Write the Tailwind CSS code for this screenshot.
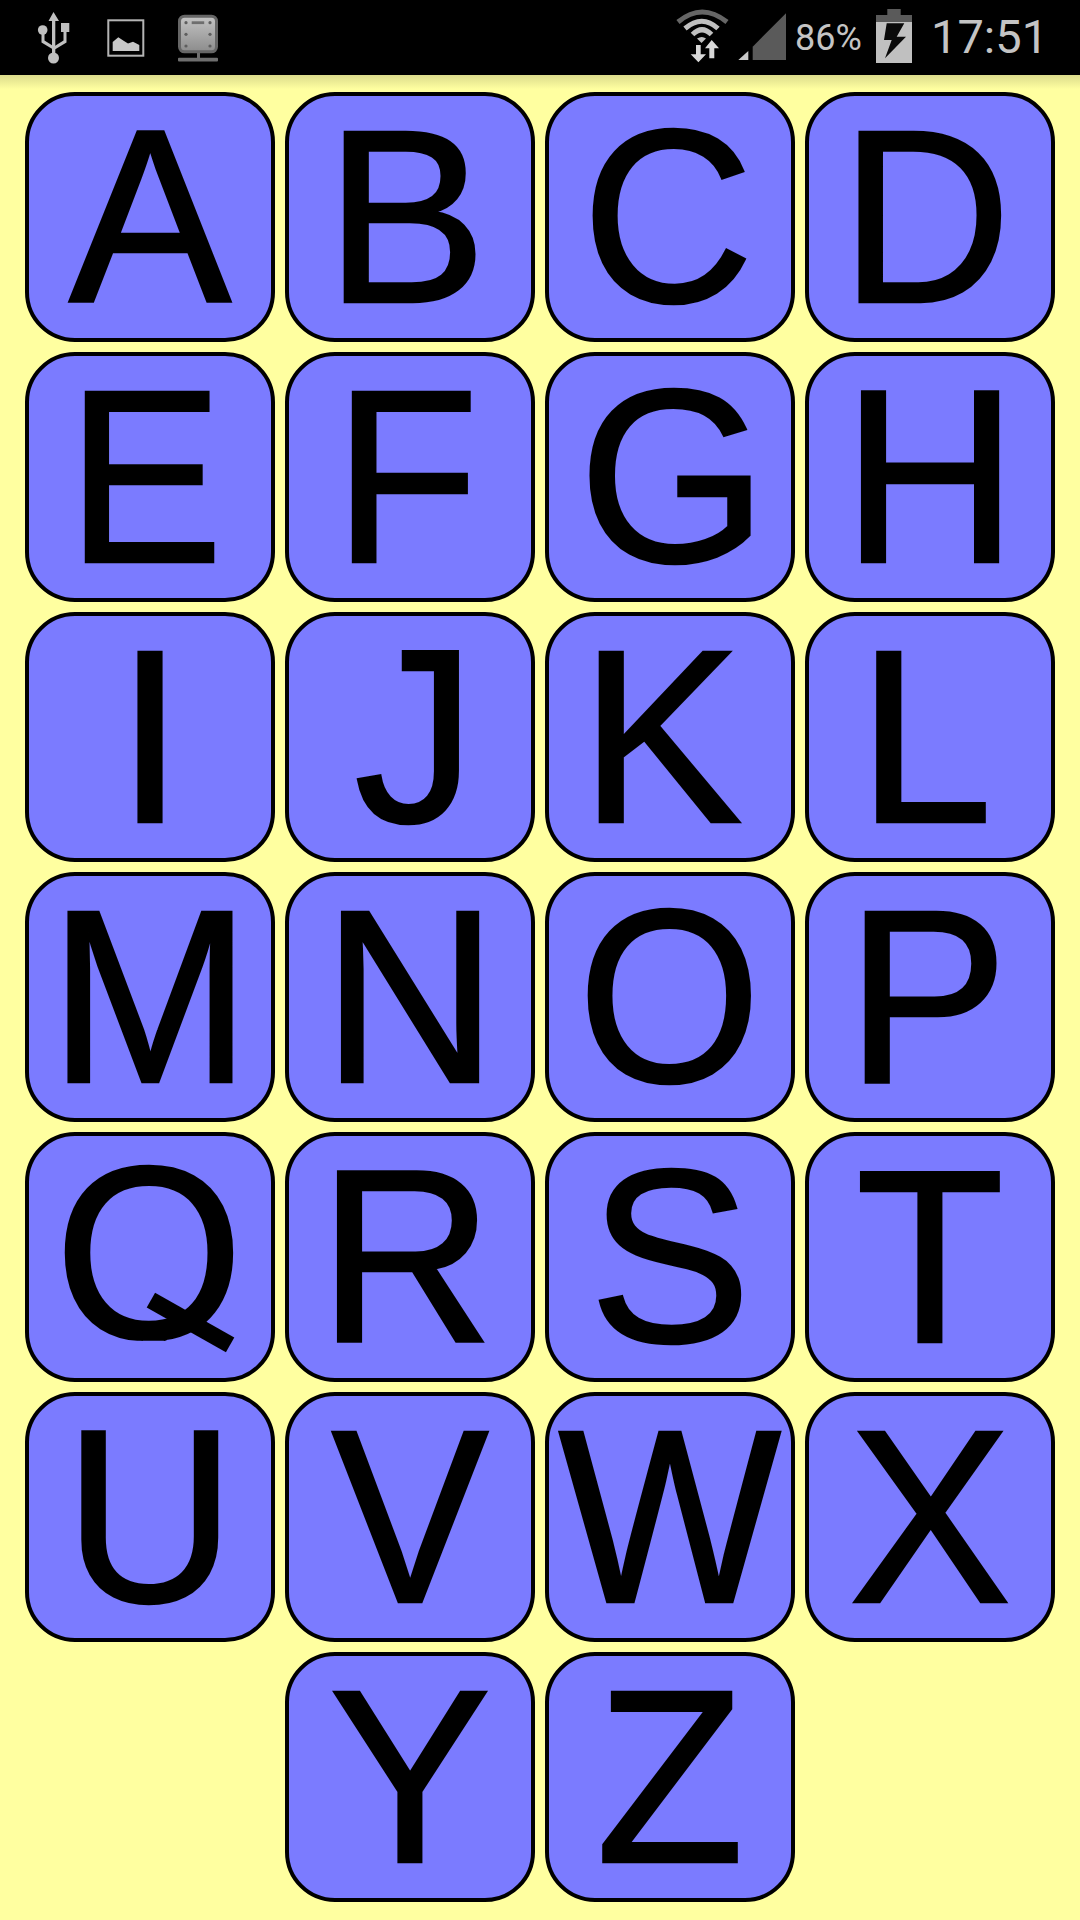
<!doctype html>
<html><head><meta charset="utf-8"><script src="https://cdn.jsdelivr.net/npm/@tailwindcss/browser@4"></script></head>
<body class="m-0 bg-[#ffffa0]">
<div class="w-[1080px] h-[1920px] overflow-hidden flex flex-col bg-[#ffffa0]">
<header class="h-[75px] shrink-0 bg-black relative text-[#c4c4c4] font-['Roboto',sans-serif]">
  <svg class="absolute left-[30px] top-[5px]" width="50" height="65" viewBox="30 5 50 65" fill="#c0c0c0"><path d="M53.500 12L59 21H55.300V55H52V21H48.500z"/><circle cx="42.700" cy="30" r="4.800"/><rect x="61" y="23" width="8.300" height="9"/><path d="M41.500 34H44.500V40.500L54 46.500V50L41.500 42.500z"/><path d="M63.500 31H66.500V42.500L54 50V46.500L63.500 40.500z"/><circle cx="53.500" cy="58" r="5.500"/></svg>
  <svg class="absolute left-[100px] top-[10px]" width="50" height="55" viewBox="100 10 50 55"><rect x="108.300" y="20.300" width="35" height="35.400" fill="none" stroke="#b4b4b4" stroke-width="2"/><path d="M112.700 51V42L118.300 37.300L124 41L128 43.500L133 41.700L139.300 45V51z" fill="#c8c8c8"/></svg>
  <svg class="absolute left-[170px] top-[10px]" width="55" height="55" viewBox="170 10 55 55"><defs><linearGradient id="g" x1="0" y1="0" x2="0" y2="1"><stop offset="0" stop-color="#c4c4c4"/><stop offset="1" stop-color="#8c8c8c"/></linearGradient></defs><rect x="179.500" y="16.200" width="37" height="35.600" rx="5" fill="url(#g)" stroke="#666" stroke-width="3"/><rect x="191.700" y="21.300" width="12.500" height="2.800" fill="#6e6e6e"/><g fill="#5e5e5e"><circle cx="186" cy="22.700" r="1.600"/><circle cx="210" cy="22.700" r="1.600"/><circle cx="186" cy="34.300" r="1.600"/><circle cx="210" cy="34.300" r="1.600"/><circle cx="186" cy="46" r="1.600"/><circle cx="210" cy="46" r="1.600"/></g><rect x="197" y="53" width="3" height="5" fill="#6e6e6e"/><rect x="178" y="57.700" width="40" height="3.800" rx="1" fill="#6e6e6e"/></svg>
  <svg class="absolute left-[670px] top-[5px]" width="125" height="65" viewBox="670 5 125 65" fill="none"><path d="M678 22Q702 2 727 22" stroke="#666" stroke-width="5"/><path d="M685 28.500Q702 14 718 28.500" stroke="#c0c0c0" stroke-width="5"/><path d="M692.500 34.500Q702 25 711.500 34.500" stroke="#c0c0c0" stroke-width="5"/><path d="M697 38.500Q702 35.500 706 38.500L701.500 43z" fill="#c0c0c0"/><path d="M696 45H700.700V54.300H706L698.400 62.300L690.700 54.300H696z" fill="#d8d8d8"/><path d="M711.700 40L719 48.300H714.300V58.300H709.300V48.300H705z" fill="#d8d8d8"/><path d="M786 13.300V60H752.700V46.700z" fill="#5a5a5a"/><path d="M738.300 60H748.300V51z" fill="#c8c8c8"/></svg>
  <span class="absolute left-[795px] top-[17px] text-[36px] leading-[42px]">86%</span>
  <svg class="absolute left-[870px] top-[5px]" width="50" height="65" viewBox="870 5 50 65"><rect x="887.300" y="9" width="13.400" height="7" fill="#5a5a5a"/><rect x="876" y="15" width="36" height="48" fill="#c0c0c0"/><rect x="876" y="15" width="36" height="7" fill="#5a5a5a"/><path d="M886.700 23.300H904.300L896.700 36.700H906L885 58.300L891.700 40H884z" fill="#0a0a0a"/></svg>
  <span class="absolute left-[931px] top-[10px] text-[47px] leading-[54px] font-normal">17:51</span>
</header>
<main class="relative flex-1 pl-[25px] pt-[17px]">
  <div class="absolute inset-x-0 top-0 h-[14px] bg-gradient-to-b from-[#dcdc8c] to-[#ffffa0]"></div>
  <div class="relative grid grid-cols-[repeat(4,250px)] auto-rows-[250px] gap-[10px] font-['Liberation_Sans',Arial,sans-serif] text-[243px] leading-none text-black [-webkit-text-stroke:2.5px_black]">
    <div class="flex items-center justify-center bg-[#7b7bff] border-[4px] border-black rounded-[50px]"><span class="scale-y-[1.02] -translate-y-[2px]">A</span></div>
    <div class="flex items-center justify-center bg-[#7b7bff] border-[4px] border-black rounded-[50px]"><span class="scale-y-[1.02] -translate-y-[2px] -translate-x-[4px]">B</span></div>
    <div class="flex items-center justify-center bg-[#7b7bff] border-[4px] border-black rounded-[50px]"><span class="scale-x-[0.98] scale-y-[1.02] -translate-y-[2px] -translate-x-[2px]">C</span></div>
    <div class="flex items-center justify-center bg-[#7b7bff] border-[4px] border-black rounded-[50px]"><span class="scale-x-[0.975] scale-y-[1.02] -translate-y-[2px] -translate-x-[4px]">D</span></div>
    <div class="flex items-center justify-center bg-[#7b7bff] border-[4px] border-black rounded-[50px]"><span class="scale-x-[0.965] scale-y-[1.02] -translate-y-[2px] -translate-x-[5px]">E</span></div>
    <div class="flex items-center justify-center bg-[#7b7bff] border-[4px] border-black rounded-[50px]"><span class="scale-x-[0.98] scale-y-[1.02] -translate-y-[2px] -translate-x-[4px]">F</span></div>
    <div class="flex items-center justify-center bg-[#7b7bff] border-[4px] border-black rounded-[50px]"><span class="scale-y-[1.02] -translate-y-[2px] translate-x-[3px]">G</span></div>
    <div class="flex items-center justify-center bg-[#7b7bff] border-[4px] border-black rounded-[50px]"><span class="scale-y-[1.02] -translate-y-[2px]">H</span></div>
    <div class="flex items-center justify-center bg-[#7b7bff] border-[4px] border-black rounded-[50px]"><span class="scale-y-[1.02] -translate-y-[2px]">I</span></div>
    <div class="flex items-center justify-center bg-[#7b7bff] border-[4px] border-black rounded-[50px]"><span class="scale-y-[1.02] -translate-y-[2px] translate-x-[5px]">J</span></div>
    <div class="flex items-center justify-center bg-[#7b7bff] border-[4px] border-black rounded-[50px]"><span class="scale-y-[1.02] -translate-y-[2px] -translate-x-[9px]">K</span></div>
    <div class="flex items-center justify-center bg-[#7b7bff] border-[4px] border-black rounded-[50px]"><span class="scale-y-[1.02] -translate-y-[2px] -translate-x-[5px]">L</span></div>
    <div class="flex items-center justify-center bg-[#7b7bff] border-[4px] border-black rounded-[50px]"><span class="scale-y-[1.02] -translate-y-[2px]">M</span></div>
    <div class="flex items-center justify-center bg-[#7b7bff] border-[4px] border-black rounded-[50px]"><span class="scale-y-[1.02] -translate-y-[2px]">N</span></div>
    <div class="flex items-center justify-center bg-[#7b7bff] border-[4px] border-black rounded-[50px]"><span class="scale-x-[0.97] scale-y-[1.02] -translate-y-[2px]">O</span></div>
    <div class="flex items-center justify-center bg-[#7b7bff] border-[4px] border-black rounded-[50px]"><span class="scale-y-[1.02] -translate-y-[2px] -translate-x-[3px]">P</span></div>
    <div class="relative flex items-center justify-center bg-[#7b7bff] border-[4px] border-black rounded-[50px]"><span class="scale-y-[1.02] -translate-y-[6px] -translate-x-[1px] [clip-path:inset(0_0_34px_0)]">Q</span><div class="absolute left-[116px] top-[178px] w-[91px] h-[17px] bg-black rotate-[29.5deg]"></div></div>
    <div class="flex items-center justify-center bg-[#7b7bff] border-[4px] border-black rounded-[50px]"><span class="scale-y-[1.02] -translate-y-[2px] -translate-x-[4px]">R</span></div>
    <div class="flex items-center justify-center bg-[#7b7bff] border-[4px] border-black rounded-[50px]"><span class="scale-y-[1.02] -translate-y-[2px]">S</span></div>
    <div class="flex items-center justify-center bg-[#7b7bff] border-[4px] border-black rounded-[50px]"><span class="scale-y-[1.02] -translate-y-[2px]">T</span></div>
    <div class="flex items-center justify-center bg-[#7b7bff] border-[4px] border-black rounded-[50px]"><span class="scale-x-[0.975] scale-y-[1.02] -translate-y-[2px]">U</span></div>
    <div class="flex items-center justify-center bg-[#7b7bff] border-[4px] border-black rounded-[50px]"><span class="scale-x-[0.97] scale-y-[1.02] -translate-y-[2px]">V</span></div>
    <div class="flex items-center justify-center bg-[#7b7bff] border-[4px] border-black rounded-[50px]"><span class="scale-x-[0.97] scale-y-[1.02] -translate-y-[2px]">W</span></div>
    <div class="flex items-center justify-center bg-[#7b7bff] border-[4px] border-black rounded-[50px]"><span class="scale-y-[1.02] -translate-y-[2px]">X</span></div>
    <div class="col-start-2 flex items-center justify-center bg-[#7b7bff] border-[4px] border-black rounded-[50px]"><span class="scale-y-[1.02] -translate-y-[2px]">Y</span></div>
    <div class="flex items-center justify-center bg-[#7b7bff] border-[4px] border-black rounded-[50px]"><span class="scale-y-[1.02] -translate-y-[2px]">Z</span></div>
  </div>
</main>
</div>
</body></html>
